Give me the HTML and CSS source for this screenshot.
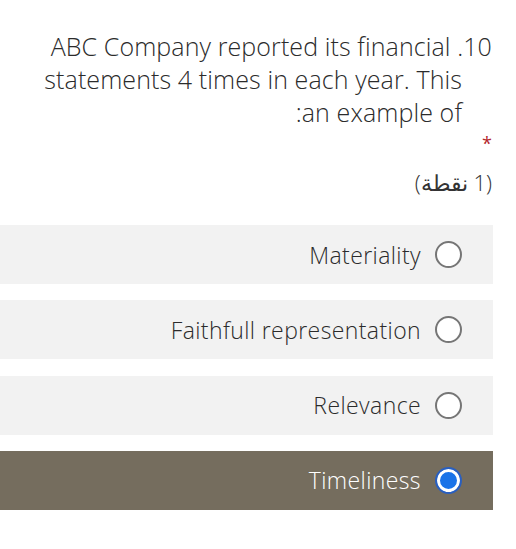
FILE: index.html
```html
<!DOCTYPE html>
<html lang="en">
<head>
<meta charset="utf-8">
<link rel="stylesheet" href="styles.css">
</head>
<body>
<div class="form" dir="rtl">
  <div class="question">10. ABC Company reported its financial<br>statements 4 times in each year. This<br>an example of:</div>
  <div class="required">*</div>
  <div class="points">(1 نقطة)</div>
  <div class="options">
    <div class="option"><span class="radio"></span><span class="label">Materiality</span></div>
    <div class="option"><span class="radio"></span><span class="label">Faithfull representation</span></div>
    <div class="option"><span class="radio"></span><span class="label">Relevance</span></div>
    <div class="option selected"><span class="radio checked"></span><span class="label">Timeliness</span></div>
  </div>
</div>
</body>
</html>
```
FILE: styles.css
```css
html, body {
  margin: 0;
  padding: 0;
  background: #ffffff;
}
.form {
  width: 516px;
  font-family: "Open Sans", "Noto Sans", sans-serif;
  color: #2b2b2b;
  padding-top: 30px;
}
.question {
  font-size: 25px;
  font-weight: 300;
  line-height: 33px;
  letter-spacing: 0.1px;
  padding-right: 54px;
  padding-left: 20px;
  text-indent: -30px;
  text-align: right;
}
.required {
  color: #b3262b;
  font-size: 18px;
  line-height: 20px;
  padding-right: 24px;
  margin-top: 4px;
}
.points {
  font-size: 22px;
  font-weight: 300;
  line-height: 30px;
  padding-right: 24px;
  margin-top: 14px;
  color: #333;
}
.options {
  margin-top: 28px;
  margin-right: 23px;
  display: flex;
  flex-direction: column;
  gap: 16.3px;
}
.option {
  height: 59px;
  background: #f2f2f2;
  display: flex;
  align-items: center;
  gap: 14px;
  padding-right: 31px;
}
.option.selected {
  background: #756d5e;
  color: #ffffff;
}
.label {
  font-size: 23px;
  font-weight: 300;
  letter-spacing: 0.4px;
}
.radio {
  width: 27px;
  height: 27px;
  box-sizing: border-box;
  border: 2px solid #767676;
  border-radius: 50%;
  background: #ffffff;
  flex: none;
}
.radio.checked {
  border: 2px solid #2a5fbf;
  background: #1a73e8;
  box-shadow: inset 0 0 0 3px #ffffff;
}
```
